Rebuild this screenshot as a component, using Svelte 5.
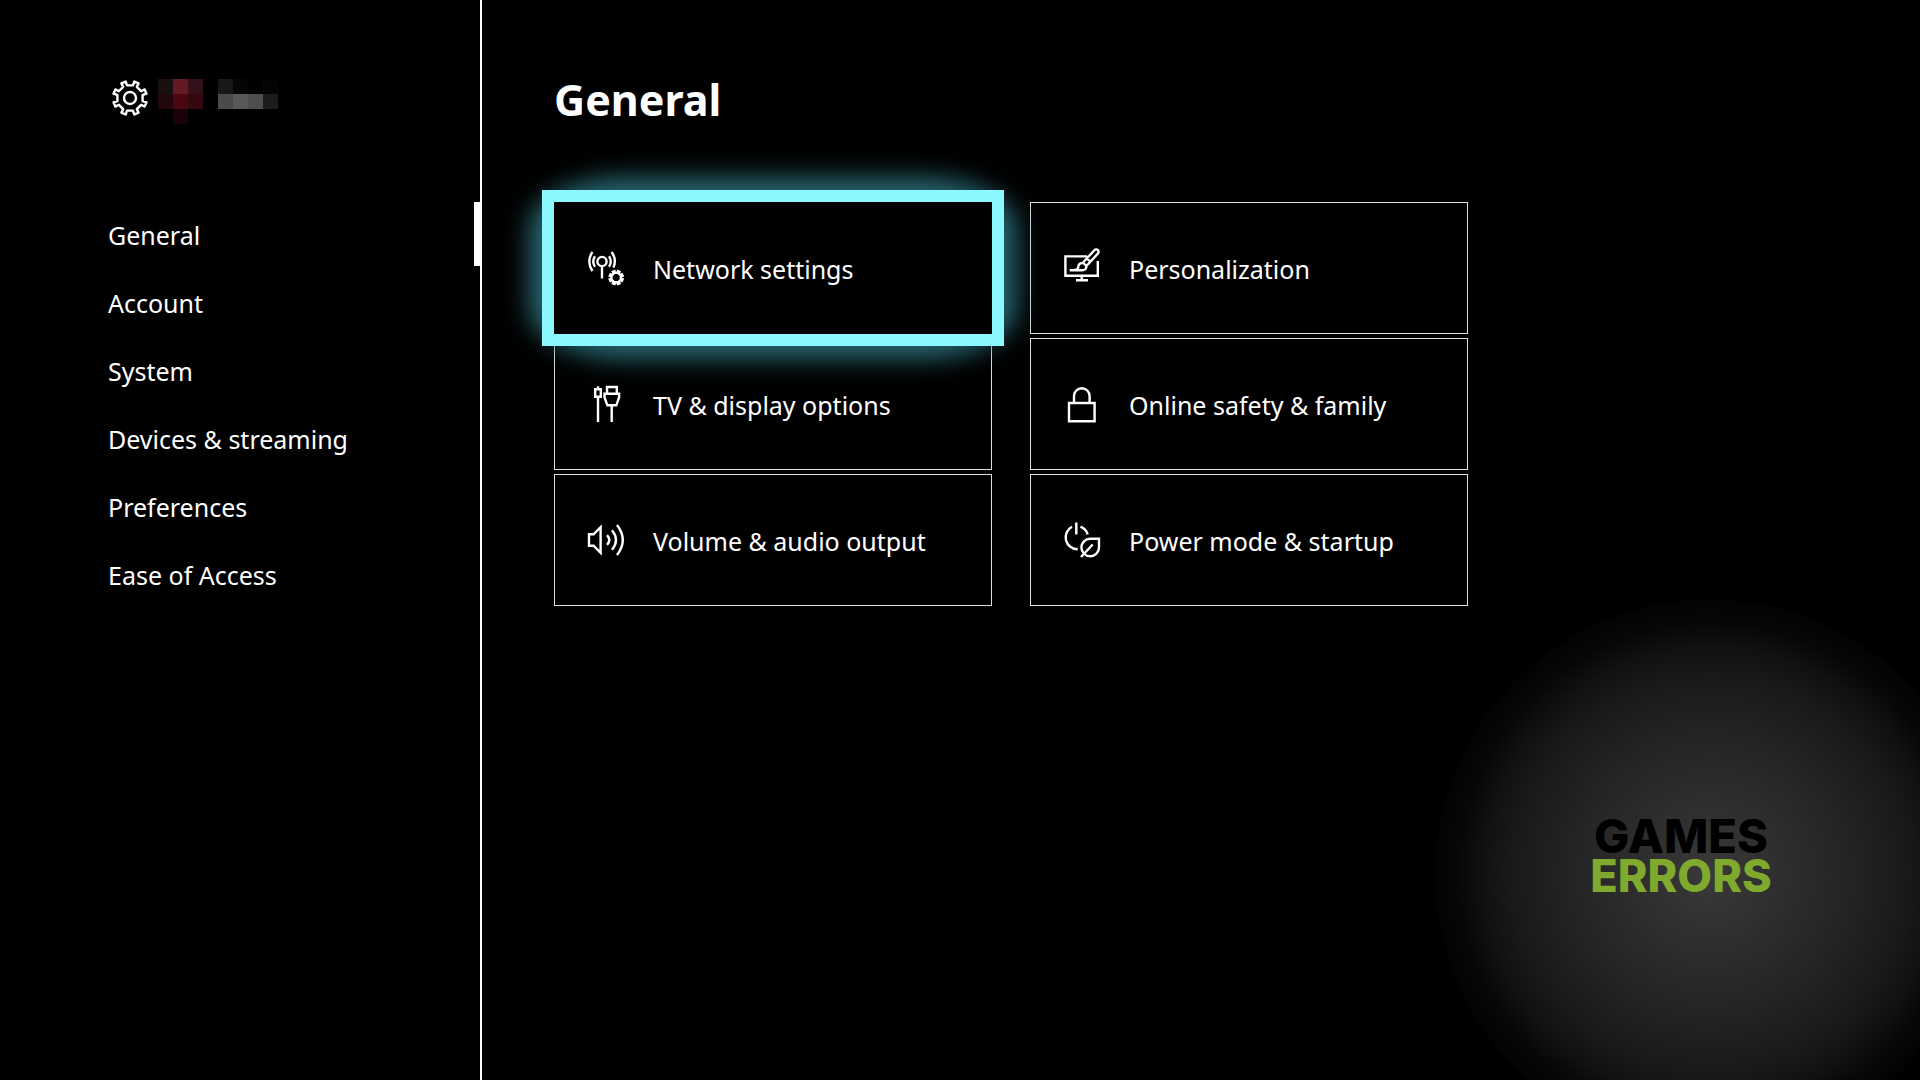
<script lang="ts">
	const sections = ['General', 'Account', 'System', 'Devices & streaming', 'Preferences', 'Ease of Access'];

	const tiles = [
		{ icon: 'network', label: 'Network settings' },
		{ icon: 'personalization', label: 'Personalization' },
		{ icon: 'display', label: 'TV & display options' },
		{ icon: 'lock', label: 'Online safety & family' },
		{ icon: 'volume', label: 'Volume & audio output' },
		{ icon: 'power', label: 'Power mode & startup' }
	];

	// Pixelated avatar and gamertag, row by row
	const avatar = ['#1a0f11', '#641a25', '#34101a', '#22080d', '#4a0710', '#35080f', '#000', '#1a0208', '#000'];
	const gamertag = ['#181818', '#040505', '#000', '#040404', '#4b4b4b', '#585858', '#4e4e4e', '#1c1c1c'];

	let section = $state('General');
	let focused = $state('network');

	// Eight-toothed cog outline, with a notch at the top
	function cog(cx: number, cy: number, outer: number, inner: number): string {
		const points: string[] = [];
		for (let i = 0; i < 8; i++) {
			const mid = 22.5 + i * 45;
			for (const [offset, r] of [[-9, inner], [-8, outer], [8, outer], [9, inner]]) {
				const a = ((mid + offset) * Math.PI) / 180;
				points.push(`${(cx + r * Math.sin(a)).toFixed(1)} ${(cy - r * Math.cos(a)).toFixed(1)}`);
			}
		}
		return `M${points.join('L')}Z`;
	}
</script>

<div class="screen">
	<aside class="sidebar">
		<div class="profile">
			<svg class="cog" width="38" height="38" viewBox="0 0 38 38" aria-hidden="true">
				<path d={cog(19, 19, 17, 13)} />
				<circle cx="19" cy="19" r="6" />
			</svg>
			<div class="pixels avatar">
				{#each avatar as color}<span style="background: {color}"></span>{/each}
			</div>
			<div class="pixels gamertag">
				{#each gamertag as color}<span style="background: {color}"></span>{/each}
			</div>
		</div>

		<nav>
			{#each sections as name}
				<a href="#settings" class:active={section === name} onclick={() => (section = name)}>{name}</a>
			{/each}
		</nav>
	</aside>

	<main>
		<h1>{section}</h1>
		<div class="tiles">
			{#each tiles as tile}
				<button type="button" class="tile" class:focused={focused === tile.icon} onclick={() => (focused = tile.icon)}>
					<svg width="40" height="40" viewBox="0 0 40 40" aria-hidden="true">
						{#if tile.icon === 'network'}
							<circle cx="17" cy="13.5" r="4.6" />
							<path d="M17 18v12.5M10 8.3q-3.6 5.2 0 10.4M24 8.3q3.6 5.2 0 10.4M7.4 4q-6.2 9.5 0 19M26.6 4q5.4 7.5 1.8 15.5" />
							<path d={cog(31.2, 29.6, 6.6, 4.8)} />
						{:else if tile.icon === 'personalization'}
							<path d="M26 8.4H4.4v19.4h32.4V13M20.7 27.8V32M15 32.2h12" />
							<path d="M22 14.5 33.4 2.2a2.4 2.4 0 0 1 3.6 3.2L25.4 18M22 14.5l3.4 3.5M26 10.5l3 3" />
							<path d="M22 15.2c-3-.6-5.2 1.6-4.8 4.6q-.7 2.5-8.5 2.5h12.5c3 0 4.6-2 4-4.5" />
						{:else if tile.icon === 'display'}
							<path d="M10.2 5.2h5.6v7.6h-5.6zM13 2.2v3M13 12.8V38" />
							<path d="M22 9.5V3h9.8v6.5M19.5 9.7h14.6v3.6l-2.8 8h-8.9l-2.9-8zM26.7 21.3V38" />
						{:else if tile.icon === 'lock'}
							<path d="M8 19h25.6v18.3H8zM13 19v-7a7.8 7.8 0 0 1 15.6 0v7" />
						{:else if tile.icon === 'volume'}
							<path d="M4 14.3h4.6l7-7.2v25.8l-7-7.2H4z" />
							<path d="M22 15.2q4.6 4.8 0 9.6M27 10.2q8 9.8 0 19.6M32 5q11.6 15 0 30" />
						{:else}
							<path d="M15.3 2.5v12M11 6.7a12 12 0 0 0 5.7 22.6M19.5 6.6a12 12 0 0 1 7.2 7.7" />
							<path d="M29.2 18.7H38v8.7a8.8 8.8 0 1 1-8.8-8.7zM20 37l11.7-12.5" />
						{/if}
					</svg>
					<span>{tile.label}</span>
				</button>
			{/each}
		</div>
	</main>

	<div class="watermark">
		<span class="games">GAMES</span>
		<span class="errors">ERRORS</span>
	</div>
</div>

<style>
	:global(body) { background: #000; }
	.screen { position: relative; display: flex; min-height: 100vh; overflow: hidden; background: #000; color: #fff; font-family: 'Noto Sans', 'Open Sans', sans-serif; font-size: 25px; }

	.sidebar { flex: none; width: 25%; border-right: 2px solid #fff; }
	.profile { display: flex; align-items: flex-start; height: 45px; padding: 79px 0 0 111px; }
	.pixels { display: grid; grid-auto-rows: 15px; }
	.avatar { grid-template-columns: repeat(3, 15px); margin: 0 15px 0 9px; }
	.gamertag { grid-template-columns: repeat(4, 15px); }

	nav { display: flex; flex-direction: column; margin-top: 78px; }
	nav a { display: flex; align-items: center; box-sizing: border-box; height: 64px; margin-bottom: 4px; padding: 2px 0 0 108px; border-right: 6px solid transparent; color: inherit; text-decoration: none; }
	nav a.active { border-right-color: #fff; }
	nav a:focus-visible { outline: 2px solid #8bf7ff; outline-offset: -2px; }

	main { flex: 1; padding: 66px 72px; }
	h1 { margin: 0; font-size: 43px; line-height: 68px; font-weight: 700; }
	.tiles { display: grid; grid-template-columns: repeat(2, minmax(0, 438px)); gap: 4px 38px; margin-top: 68px; }
	.tile { position: relative; display: flex; align-items: center; gap: 28px; height: 132px; padding: 0 30px; border: 1px solid #ddd; background: #000; color: inherit; font: inherit; text-align: left; cursor: pointer; }
	.tile svg { flex: none; }
	.tile span { padding-top: 2px; }

	/* Glow first, then the solid frame on top of it */
	.tile.focused { z-index: 1; border-color: #000; outline: none; }
	.tile.focused::before { content: ''; position: absolute; inset: -26px; z-index: -1; border-radius: 20% / 28%; background: #27656f; filter: blur(12px); }
	.tile.focused::after { content: ''; position: absolute; inset: -1px; z-index: -1; background: #000; box-shadow: 0 0 0 12px #8bf7ff; }

	svg { fill: none; stroke: #fff; stroke-width: 2.4; }
	.cog { stroke-linejoin: round; }

	.watermark { position: absolute; right: -66px; bottom: -70px; display: flex; flex-direction: column; align-items: center; justify-content: center; width: 552px; height: 552px; padding: 0 58px 36px 0; box-sizing: border-box; border-radius: 50%; background: radial-gradient(closest-side, #393939, #242424 50%, #191919 72%, #111 82%, #060707 91%, #020403 99%, transparent); font-family: Inter, sans-serif; font-weight: 800; line-height: 40px; pointer-events: none; }
	.games { color: #000; font-size: 47px; }
	.errors { color: #7faa2d; font-size: 45px; }
</style>
